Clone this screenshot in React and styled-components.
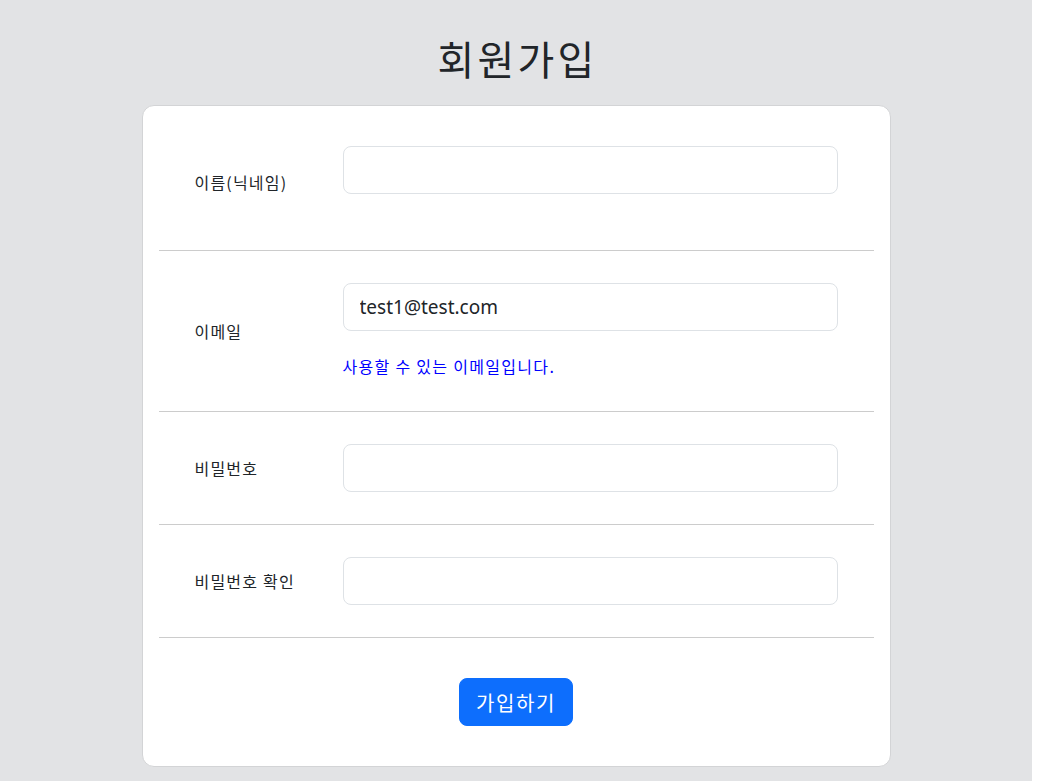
import React from "react";
import styled, { createGlobalStyle } from "styled-components";

const Global = createGlobalStyle`
  html, body { margin: 0; padding: 0; background: #ffffff; }
  body {
    font-family: "Noto Sans", "Noto Sans CJK KR", sans-serif;
    color: #212529;
  }
  * { box-sizing: border-box; }
`;

const Page = styled.div`
  width: calc(100% - 9px);
  min-height: 100vh;
  background: #e2e3e5;
  padding: 34px 0 40px;
  display: flex;
  flex-direction: column;
  align-items: center;
`;

const Title = styled.h1`
  margin: 0 0 23px;
  font-family: "Noto Sans CJK KR", sans-serif;
  font-size: 40px;
  font-weight: 400;
  line-height: 48px;
  letter-spacing: 3.2px;
  padding-left: 3.2px;
  color: #212529;
`;

const Card = styled.form`
  width: 749px;
  background: #ffffff;
  border: 1px solid #d3d4d6;
  border-radius: 12px;
  padding: 8px 16px;
  display: flex;
  flex-direction: column;
`;

const Row = styled.div`
  display: grid;
  grid-template-columns: 148px 1fr;
  align-items: center;
  padding: 32px 36px;
  border-bottom: 1px solid #cccccc;
`;

const Label = styled.label`
  font-family: "Noto Sans CJK KR", sans-serif;
  font-size: 16px;
  line-height: 24px;
  letter-spacing: 1.2px;
  color: #212529;
`;

const Field = styled.div`
  display: flex;
  flex-direction: column;
`;

const Input = styled.input`
  height: 48px;
  width: 100%;
  padding: 8px 16px;
  font-family: "Noto Sans", "Noto Sans CJK KR", sans-serif;
  font-size: 19px;
  color: #212529;
  background: #ffffff;
  border: 1px solid #dee2e6;
  border-radius: 8px;
  outline: none;
`;

const Message = styled.div`
  margin-top: 23px;
  padding-bottom: 1px;
  font-family: "Noto Sans CJK KR", sans-serif;
  font-size: 16px;
  line-height: 24px;
  letter-spacing: 1.3px;
  color: ${(p) => p.$color || "#0000ff"};

  &:empty {
    margin-top: 24px;
    padding-bottom: 0;
    line-height: 0;
  }
`;

const Actions = styled.div`
  display: flex;
  justify-content: center;
  padding: 40px 0 32px;
`;

const Button = styled.button`
  height: 48px;
  padding: 0 16px;
  font-family: "Noto Sans CJK KR", sans-serif;
  font-size: 20px;
  letter-spacing: 1.6px;
  color: #ffffff;
  background: #0d6efd;
  border: 1px solid #0d6efd;
  border-radius: 8px;
  cursor: pointer;
`;

const fields = [
  { label: "이름(닉네임)", type: "text", value: "", message: "" },
  { label: "이메일", type: "email", value: "test1@test.com", message: "사용할 수 있는 이메일입니다." },
  { label: "비밀번호", type: "password", value: "" },
  { label: "비밀번호 확인", type: "password", value: "" },
];

export default function App() {
  return (
    <>
      <Global />
      <Page>
        <Title>회원가입</Title>
        <Card onSubmit={(e) => e.preventDefault()}>
          {fields.map((f) => (
            <Row key={f.label}>
              <Label>{f.label}</Label>
              <Field>
                <Input type={f.type} defaultValue={f.value} />
                {f.message !== undefined && <Message>{f.message}</Message>}
              </Field>
            </Row>
          ))}
          <Actions>
            <Button type="submit">가입하기</Button>
          </Actions>
        </Card>
      </Page>
    </>
  );
}
